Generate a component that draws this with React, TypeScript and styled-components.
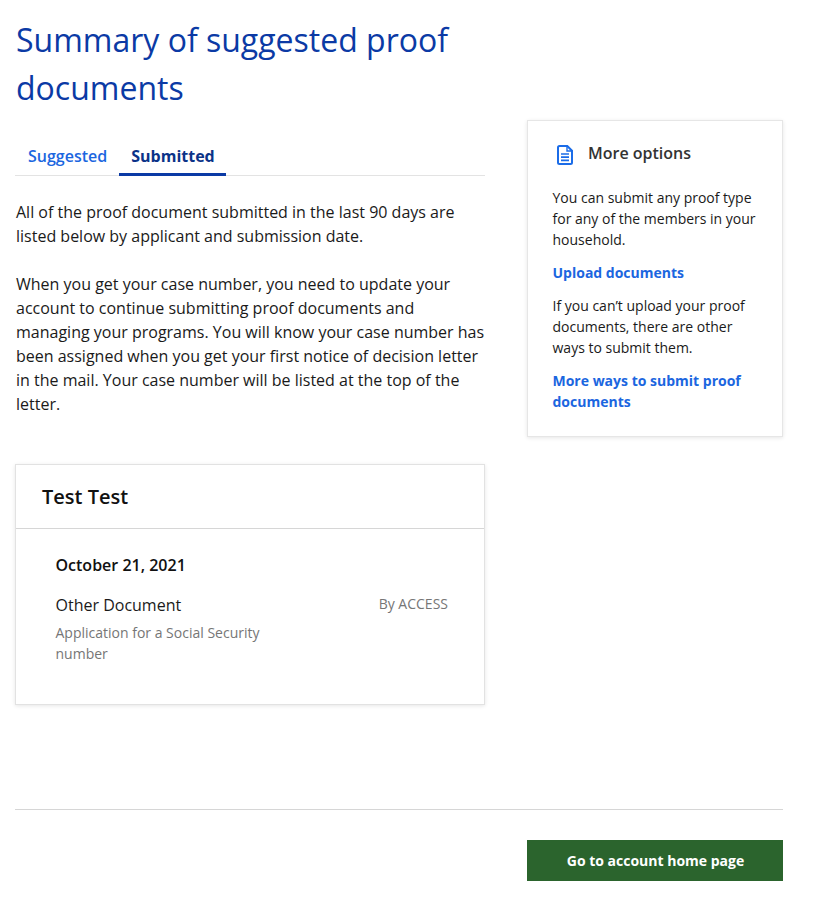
import React from "react";
import styled, { createGlobalStyle } from "styled-components";

const Global = createGlobalStyle`
  html, body { margin: 0; padding: 0; background: #fff; }
  body { font-family: "Open Sans", sans-serif; color: #1a1a1a; }
  * { box-sizing: border-box; }
`;

const Page = styled.div`
  width: 832px;
  height: 913px;
  padding: 16px 49px 0 15px;
  overflow: hidden;
`;

const Columns = styled.div`
  display: grid;
  grid-template-columns: 470px 256px;
  column-gap: 42px;
  height: 793px;
`;

const Main = styled.main`
  min-width: 0;
`;

const Title = styled.h1`
  margin: 0 0 22px;
  padding-left: 1px;
  font-size: 32px;
  line-height: 48px;
  font-weight: 400;
  color: #0b3aa5;
`;

const Tabs = styled.div`
  display: flex;
  border-bottom: 1px solid #e3e3e3;
  height: 42px;
  padding-left: 1px;
`;

const Tab = styled.div<{ $active?: boolean }>`
  height: 42px;
  padding: ${(p) => (p.$active ? "5px 11px 0 12px" : "2px 12px 0")};
  display: flex;
  align-items: center;
  justify-content: center;
  font-size: 16px;
  font-weight: ${(p) => (p.$active ? 700 : 600)};
  color: ${(p) => (p.$active ? "#0b3388" : "#1b66e0")};
  border-bottom: ${(p) => (p.$active ? "3px solid #0b3aa5" : "0")};
`;

const Body = styled.p`
  margin: 0;
  font-size: 16px;
  line-height: 24px;
  color: #1a1a1a;
`;

const Intro = styled.div`
  display: flex;
  flex-direction: column;
  gap: 24px;
  padding: 24px 0 0 1px;
`;

const Card = styled.section`
  margin-top: 48px;
  height: 241px;
  border: 1px solid #e2e2e2;
  box-shadow: 0 1px 4px rgba(0, 0, 0, 0.1);
  background: #fff;
`;

const CardHead = styled.h2`
  margin: 0;
  height: 64px;
  padding-left: 26px;
  display: flex;
  align-items: center;
  font-size: 20px;
  font-weight: 600;
  color: #111;
  border-bottom: 1px solid #d6d6d6;
`;

const CardBody = styled.div`
  padding: 24px 36px 0 39.5px;
`;

const DateLine = styled.div`
  font-size: 16px;
  line-height: 24px;
  font-weight: 600;
  color: #111;
`;

const DocRow = styled.div`
  margin-top: 16px;
  display: flex;
  justify-content: space-between;
  align-items: flex-start;
`;

const DocName = styled.div`
  font-size: 16px;
  line-height: 24px;
  color: #1a1a1a;
`;

const DocNote = styled.div`
  width: 230px;
  margin-top: 5px;
  font-size: 14px;
  line-height: 21px;
  color: #767676;
`;

const DocBy = styled.div`
  font-size: 14px;
  line-height: 22px;
  color: #767676;
`;

const Aside = styled.aside`
  margin-top: 104px;
  height: 317px;
  padding: 16px 25px 0 24.5px;
  border: 1px solid #e6e6e6;
  box-shadow: 0 1px 4px rgba(0, 0, 0, 0.1);
  background: #fff;
`;

const AsideHead = styled.div`
  display: flex;
  align-items: center;
  gap: 15px;
  height: 32px;
  padding-left: 4.5px;
  margin-bottom: 18px;
  font-size: 16px;
  font-weight: 600;
  color: #333;
`;

const AsideText = styled.p`
  margin: 0 0 12px;
  font-size: 14px;
  line-height: 21px;
  color: #1a1a1a;
`;

const AsideLink = styled.a`
  display: block;
  margin: 0 0 12px;
  font-size: 14px;
  line-height: 21px;
  font-weight: 700;
  color: #1b66e0;
`;

const Footer = styled.footer`
  border-top: 1px solid #d6d6d6;
  padding-top: 30px;
  display: flex;
  justify-content: flex-end;
`;

const Primary = styled.button`
  width: 256px;
  height: 41px;
  border: 0;
  padding: 0 0 0 1px;
  background: #2b642d;
  color: #fff;
  font-family: inherit;
  font-size: 14px;
  font-weight: 700;
`;

const IconSvg = styled.svg`
  flex: none;
  margin-top: 4px;
`;

const DocIcon = () => (
  <IconSvg width="16" height="20" viewBox="0 0 16 20" fill="none" stroke="#1b6ce8" strokeWidth="2" aria-hidden="true">
    <path d="M2.5 1h7.8L15 5.7v11.8a1.5 1.5 0 0 1-1.5 1.5h-11A1.5 1.5 0 0 1 1 17.5v-15A1.5 1.5 0 0 1 2.5 1z" />
    <path d="M10 1.5v4.5h4.5" strokeWidth="1.4" />
    <path d="M4 9h8M4 12.2h8M4 15.4h8" strokeWidth="1.7" />
  </IconSvg>
);

export default function App() {
  return (
    <Page>
      <Global />
      <Columns>
        <Main>
          <Title>Summary of suggested proof documents</Title>
          <Tabs>
            <Tab>Suggested</Tab>
            <Tab $active>Submitted</Tab>
          </Tabs>
          <Intro>
            <Body>All of the proof document submitted in the last 90 days are listed below by applicant and submission date.</Body>
            <Body>When you get your case number, you need to update your account to continue submitting proof documents and managing your programs. You will know your case number has been assigned when you get your first notice of decision letter in the mail. Your case number will be listed at the top of the letter.</Body>
          </Intro>
          <Card>
            <CardHead>Test Test</CardHead>
            <CardBody>
              <DateLine>October 21, 2021</DateLine>
              <DocRow>
                <div>
                  <DocName>Other Document</DocName>
                  <DocNote>Application for a Social Security number</DocNote>
                </div>
                <DocBy>By ACCESS</DocBy>
              </DocRow>
            </CardBody>
          </Card>
        </Main>
        <Aside>
          <AsideHead>
            <DocIcon />
            More options
          </AsideHead>
          <AsideText>You can submit any proof type for any of the members in your household.</AsideText>
          <AsideLink>Upload documents</AsideLink>
          <AsideText>If you can’t upload your proof documents, there are other ways to submit them.</AsideText>
          <AsideLink>More ways to submit proof documents</AsideLink>
        </Aside>
      </Columns>
      <Footer>
        <Primary>Go to account home page</Primary>
      </Footer>
    </Page>
  );
}
